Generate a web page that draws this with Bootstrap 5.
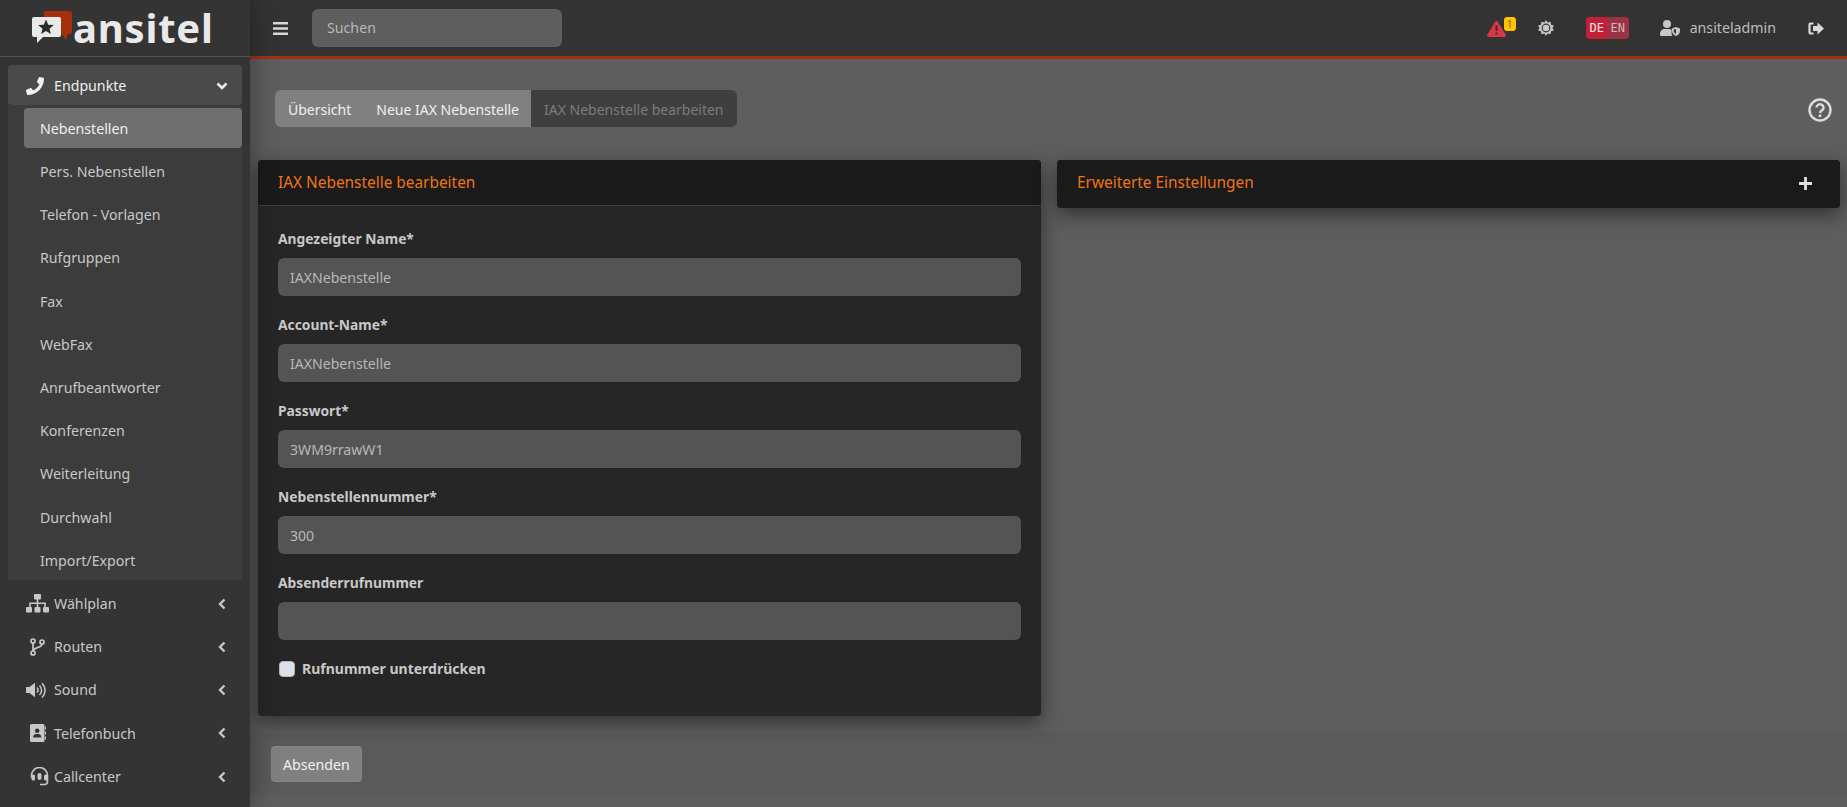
<!DOCTYPE html>
<html lang="de">
<head>
<meta charset="utf-8">
<title>ansitel</title>
<link rel="stylesheet" href="https://cdn.jsdelivr.net/npm/bootstrap@5.3.0/dist/css/bootstrap.min.css">
<style>
html,body{height:807px;overflow:hidden}
body{font-family:"Noto Sans","Liberation Sans",sans-serif;font-size:14.2px;background:#5e5e5e;color:#c8c8c8}
.app-wrap{height:807px}
.side-panel{width:250px;flex:none;background:#343434;box-shadow:0 0 24px rgba(0,0,0,.4);z-index:3;height:807px;overflow:hidden}
.logo-box{height:57px;border-bottom:1px solid #4b545c;padding-left:32px;gap:0}
.logo-word{font-family:"Noto Sans",sans-serif;font-size:40px;font-weight:700;line-height:56px;height:56px;color:#e9e9e9;letter-spacing:.8px}
.side-nav{padding:8px 8px 0}
.side-link{height:40px;color:#c8c8c8;padding:1px 14px 0 18px;border-radius:4px;margin-bottom:3.25px;text-decoration:none}
.side-link.is-open{background:#4a4a4a;color:#efefef;margin-bottom:0}
.side-ico{width:28px;flex:none;display:flex;justify-content:flex-start;align-items:center}
.side-ico svg{fill:#c8c8c8}
.is-open .side-ico svg{fill:#f2f2f2}
.side-sub{background:#3c3c3c;padding:3px 0 0 16px;height:475px;margin-bottom:3px}
.sub-link{display:flex;align-items:center;height:40px;margin-bottom:3.2px;padding:1px 0 0 16px;color:#c8c8c8;border-radius:4px;text-decoration:none}
.sub-link.is-active{background:#6f6f6f;color:#efefef}
.top-bar{height:59px;flex:none;background:#333;border-bottom:3px solid #a5300e;padding:0 0 0 23px}
.top-bar .form-control{width:250px;height:38px;margin-left:24px;background:#5e5e5e;border:0;color:#b8b8b8;font-size:14.2px;padding:0 0 2px 15px}
.top-bar .form-control::placeholder{color:#b8b8b8;opacity:1}
.tool-area{margin-left:auto;color:#c8c8c8}
.warn-slot{width:30px;height:20px;margin:0 21px 3px 0}
.warn-pip{position:absolute;left:17px;top:0;width:12px;height:14px;background:#ffc107;border-radius:3px;font-size:10px;line-height:14px;text-align:center;color:#8a6d0b}
.lang-pair{margin:0 31px 0 32px;font-family:"DejaVu Sans Mono","Liberation Mono",monospace}
.lang-pair .btn{--bs-btn-padding-x:0;--bs-btn-padding-y:0;--bs-btn-font-size:12px;--bs-btn-border-width:0;width:22px;height:22px;line-height:22px;border-radius:4px}
.lang-on{--bs-btn-bg:#c32038;--bs-btn-color:#f4e6e8;--bs-btn-hover-bg:#c32038;--bs-btn-hover-color:#f4e6e8}
.lang-off{--bs-btn-bg:#9a3444;--bs-btn-color:#d9b5ba;--bs-btn-hover-bg:#9a3444;--bs-btn-hover-color:#d9b5ba}
.user-name{margin:0 32px 0 10px;color:#bdbdbd}
.exit-slot{margin-right:23px}
.crumb-row{padding:31px 15px 0 25px;height:101px}
.crumb-row .btn{--bs-btn-font-size:14px;--bs-btn-padding-y:0;--bs-btn-padding-x:13px;--bs-btn-border-width:0;height:37px;line-height:39px}
.crumb-link{--bs-btn-bg:#808080;--bs-btn-color:#f0f0f0;--bs-btn-hover-bg:#808080;--bs-btn-hover-color:#f0f0f0}
.btn-group>.crumb-link:first-child{box-shadow:inset -1px 0 0 #6c6c6c}
.btn-group>.crumb-link:nth-child(2){margin-left:0}
.crumb-last.btn{--bs-btn-bg:#3f3f3f;--bs-btn-color:#7c7c7c;--bs-btn-disabled-bg:#3f3f3f;--bs-btn-disabled-color:#7c7c7c;opacity:1;margin-left:0}
.panes{padding:0 7px 0 8px;gap:16px;position:relative;z-index:2}
.pane{width:783px;flex:none;background:#262626;border:0;border-radius:4px;box-shadow:0 6px 20px rgba(0,0,0,.5);color:#c8c8c8}
.pane .card-header{height:46px;background:#1a1a1a;border-bottom:1px solid #3d3d3d;color:#f0750f;font-size:15.4px;padding:0 20px;border-radius:4px 4px 0 0}
.pane-flat .card-header{height:48px;border-bottom:0;border-radius:4px;padding-bottom:2px}
.pane .card-body{padding:22px 20px 0;height:510px}
.field-box{height:86px}
.pane .form-label{font-weight:700;color:#c8c8c8;margin-bottom:8px;line-height:22px;display:block;font-size:13.8px}
.pane .form-control{height:38px;background:#545454;border:0;color:#b8b8b8;font-size:14.1px;padding:0 12px}
.pane .form-check{min-height:0;padding-left:24px;margin:0;line-height:22px;font-size:14px;font-weight:700}
.pane .form-check-input{width:16px;height:16px;margin:3px 0 0 -23px;background-color:#dde1e7;border:1px solid #b5b5b5;border-radius:4px}
.foot-band{background:#5a5a5a;margin-top:17px;height:62px;padding:13px 0 0 21px}
.foot-band .btn{--bs-btn-bg:#808080;--bs-btn-color:#f0f0f0;--bs-btn-hover-bg:#808080;--bs-btn-hover-color:#f0f0f0;--bs-btn-border-color:#878787;--bs-btn-hover-border-color:#878787;--bs-btn-font-size:14.2px;--bs-btn-padding-y:0;--bs-btn-padding-x:11px;height:36px;line-height:35px;border-radius:4px}
</style>
</head>
<body>
<div class="app-wrap d-flex">
  <aside class="side-panel d-flex flex-column">
    <div class="logo-box d-flex align-items-center">
      <svg width="41" height="34" viewBox="0 0 41 34">
        <path fill="#a5300e" d="M12 0H38a2 2 0 0 1 2 2V21a2 2 0 0 1-2 2H36L34 29 29 22H12Z"/>
        <path fill="#e9e9e9" d="M2 6H27a2 2 0 0 1 2 2V24a2 2 0 0 1-2 2H11L5 32V26H2a2 2 0 0 1-2-2V8a2 2 0 0 1 2-2Z"/>
        <path fill="#2b2b2b" d="M14 8.500l2.200 5.200 5.600.4-4.300 3.600 1.400 5.400-4.900-3-4.900 3 1.400-5.400-4.300-3.600 5.600-.4Z"/>
      </svg>
      <span class="logo-word">ansitel</span>
    </div>
    <nav class="side-nav nav flex-column flex-nowrap">
      <a class="side-link is-open d-flex align-items-center" href="#">
        <span class="side-ico"><svg width="18" height="18" viewBox="0 0 512 512"><path d="M493.4 24.6l-104-24c-11.3-2.6-22.9 3.3-27.5 13.9l-48 112c-4.2 9.8-1.4 21.3 6.9 28l60.6 49.6c-36 76.7-98.9 140.5-177.2 177.2l-49.6-60.6c-6.8-8.3-18.2-11.1-28-6.9l-112 48C3.9 366.5-2 378.1.6 389.4l24 104C27.1 504.2 36.7 512 48 512c256.1 0 464-207.5 464-464 0-11.2-7.7-20.9-18.6-23.4z"/></svg></span>
        <span class="flex-grow-1">Endpunkte</span>
        <svg width="12" height="12" viewBox="0 0 12 12"><path d="M1.500 3.500 6 8l4.500-4.500" fill="none" stroke="#f2f2f2" stroke-width="2.600"/></svg>
      </a>
      <div class="side-sub">
        <a class="sub-link is-active" href="#">Nebenstellen</a>
        <a class="sub-link" href="#">Pers. Nebenstellen</a>
        <a class="sub-link" href="#">Telefon - Vorlagen</a>
        <a class="sub-link" href="#">Rufgruppen</a>
        <a class="sub-link" href="#">Fax</a>
        <a class="sub-link" href="#">WebFax</a>
        <a class="sub-link" href="#">Anrufbeantworter</a>
        <a class="sub-link" href="#">Konferenzen</a>
        <a class="sub-link" href="#">Weiterleitung</a>
        <a class="sub-link" href="#">Durchwahl</a>
        <a class="sub-link" href="#">Import/Export</a>
      </div>
      <a class="side-link d-flex align-items-center" href="#">
        <span class="side-ico"><svg width="23" height="19" viewBox="0 0 23 19"><rect x="8" y="0" width="7" height="5.500" rx="1"/><rect x="0" y="13" width="6" height="5.500" rx="1"/><rect x="8.500" y="13" width="6" height="5.500" rx="1"/><rect x="17" y="13" width="6" height="5.500" rx="1"/><path d="M10.700 5h1.600v3.500h7.500V13h-1.600v-3H12.300v3h-1.600v-3H4.800v3H3.200V8.500h7.500Z"/></svg></span>
        <span class="flex-grow-1">Wählplan</span>
        <svg width="12" height="12" viewBox="0 0 12 12"><path d="M8.500 1.500 4 6l4.500 4.500" fill="none" stroke="#c8c8c8" stroke-width="2.400"/></svg>
      </a>
      <a class="side-link d-flex align-items-center" href="#">
        <span class="side-ico"><svg class="ms-1" width="15" height="18" viewBox="0 0 15 18"><g fill="none" stroke="#c8c8c8" stroke-width="1.700"><circle cx="3" cy="3" r="2"/><circle cx="3" cy="15" r="2"/><circle cx="12" cy="4" r="2"/><path d="M3 5V13M12 6C12 10 4 9 3 13"/></g></svg></span>
        <span class="flex-grow-1">Routen</span>
        <svg width="12" height="12" viewBox="0 0 12 12"><path d="M8.500 1.500 4 6l4.500 4.500" fill="none" stroke="#c8c8c8" stroke-width="2.400"/></svg>
      </a>
      <a class="side-link d-flex align-items-center" href="#">
        <span class="side-ico"><svg width="21" height="17" viewBox="0 0 21 17"><path d="M0 5H3.500L9 .8V15.200L3.500 11H0Z"/><g fill="none" stroke="#c8c8c8" stroke-width="1.500"><path d="M11 5.500a3.500 3.500 0 0 1 0 5"/><path d="M13.500 3.500a6.500 6.500 0 0 1 0 9.500"/><path d="M16 1.200a10 10 0 0 1 0 14.300"/></g></svg></span>
        <span class="flex-grow-1">Sound</span>
        <svg width="12" height="12" viewBox="0 0 12 12"><path d="M8.500 1.500 4 6l4.500 4.500" fill="none" stroke="#c8c8c8" stroke-width="2.400"/></svg>
      </a>
      <a class="side-link d-flex align-items-center" href="#">
        <span class="side-ico"><svg class="ms-1" width="16" height="18" viewBox="0 0 16 18"><path fill-rule="evenodd" d="M1.500 0H13a1.500 1.500 0 0 1 1.500 1.500V16.500A1.500 1.500 0 0 1 13 18H1.500A1.500 1.500 0 0 1 0 16.500V1.500A1.500 1.500 0 0 1 1.500 0ZM7.200 4.500a2.300 2.300 0 1 0 0 4.600 2.300 2.300 0 0 0 0-4.600ZM3 13.500H11.400C11.400 11.500 10 10 8.500 10H5.900C4.400 10 3 11.500 3 13.500Z"/><rect x="15" y="2.500" width="1" height="3"/><rect x="15" y="7.500" width="1" height="3"/><rect x="15" y="12.500" width="1" height="3"/></svg></span>
        <span class="flex-grow-1">Telefonbuch</span>
        <svg width="12" height="12" viewBox="0 0 12 12"><path d="M8.500 1.500 4 6l4.500 4.500" fill="none" stroke="#c8c8c8" stroke-width="2.400"/></svg>
      </a>
      <a class="side-link d-flex align-items-center" href="#">
        <span class="side-ico"><svg class="ms-1" width="19" height="19" viewBox="0 0 19 19"><path d="M1.500 10.500V8.500a8 8 0 0 1 16 0v6c0 2-1.500 3-3 3H10" fill="none" stroke="#c8c8c8" stroke-width="1.600"/><rect x="1.500" y="7.500" width="3.500" height="6" rx="1.500"/><rect x="14" y="7.500" width="3.500" height="6" rx="1.500"/><path d="M6 7.500a3.500 3.500 0 0 1 7 0v4a3.500 3.500 0 0 1-7 0Z" fill="#343434"/><path d="M7.500 8a2 2 0 0 1 4 0v3a2 2 0 0 1-4 0Z"/></svg></span>
        <span class="flex-grow-1">Callcenter</span>
        <svg width="12" height="12" viewBox="0 0 12 12"><path d="M8.500 1.500 4 6l4.500 4.500" fill="none" stroke="#c8c8c8" stroke-width="2.400"/></svg>
      </a>
    </nav>
  </aside>

  <div class="flex-grow-1 d-flex flex-column" style="min-width:0">
    <header class="top-bar navbar flex-nowrap justify-content-start">
      <svg width="15" height="13" viewBox="0 0 15 13"><path d="M0 0H15V2.500H0ZM0 5.200H15V7.700H0ZM0 10.500H15V13H0Z" fill="#d8d8d8"/></svg>
      <input class="form-control" type="text" placeholder="Suchen">
      <div class="tool-area d-flex align-items-center">
        <span class="warn-slot position-relative d-block">
          <svg class="position-absolute bottom-0 start-0" width="19" height="16" viewBox="0 0 19 16"><path d="M9.500 0a1.500 1.500 0 0 1 1.300.8l8 13A1.500 1.500 0 0 1 17.500 16h-16a1.500 1.500 0 0 1-1.300-2.200l8-13A1.500 1.500 0 0 1 9.500 0Z" fill="#dc3545"/><path d="M8.500 4.500h2V10h-2ZM8.500 11.500h2v2h-2Z" fill="#333"/></svg>
          <span class="warn-pip">1</span>
        </span>
        <svg width="16" height="16" viewBox="0 0 16 16"><path d="M8 0l1.600 2.600 2.900-.9.500 3 2.900.9-1.400 2.400 1.400 2.400-2.900.9-.5 3-2.900-.9L8 16l-1.600-2.600-2.900.9-.5-3-2.900-.9L1.500 8 .1 5.600 3 4.700l.5-3 2.900.9Z" fill="#c8c8c8" fill-rule="evenodd"/><circle cx="8" cy="8" r="4.400" fill="#333"/><circle cx="8" cy="8" r="3.200" fill="#c8c8c8"/></svg>
        <div class="lang-pair btn-group" role="group">
          <a class="btn lang-on" href="#">DE</a>
          <a class="btn lang-off" href="#">EN</a>
        </div>
        <svg width="20" height="16" viewBox="0 0 20 16"><circle cx="7" cy="4" r="4" fill="#c8c8c8"/><path d="M0 14.500C0 11 2 9 5 9h4c1 0 2 .3 2.600 .8V14c0 .8.300 1.400.8 2H1.500A1.500 1.500 0 0 1 0 14.500Z" fill="#c8c8c8"/><path d="M16 7l4 1.500V11c0 2.500-2 4.300-4 5-2-.7-4-2.500-4-5V8.500Z" fill="#c8c8c8"/><path d="M16 9v5c-1-.5-2.300-1.600-2.300-3V9.700Z" fill="#333"/></svg>
        <span class="user-name">ansiteladmin</span>
        <svg class="exit-slot" width="16" height="13" viewBox="0 0 16 13"><path d="M5.500 1.500H2.500A1 1 0 0 0 1.500 2.500V10.500A1 1 0 0 0 2.500 11.500H5.500" fill="none" stroke="#d8d8d8" stroke-width="2.200"/><path d="M9.500 0.500 16 6.500 9.500 12.500V9H5V4H9.500Z" fill="#d8d8d8"/></svg>
      </div>
    </header>

    <main class="flex-grow-1">
      <div class="crumb-row d-flex align-items-start justify-content-between">
        <div class="btn-group" role="group">
          <a class="btn crumb-link" href="#">Übersicht</a>
          <a class="btn crumb-link" href="#">Neue IAX Nebenstelle</a>
          <button class="btn crumb-last" disabled>IAX Nebenstelle bearbeiten</button>
        </div>
        <svg class="mt-2" width="24" height="24" viewBox="0 0 24 24"><circle cx="12" cy="12" r="10.500" fill="none" stroke="#dcdcdc" stroke-width="2.400"/><path d="M8.500 9.500a3.500 3.300 0 1 1 5.500 2.700c-1.400.9-2 1.300-2 2.800" fill="none" stroke="#dcdcdc" stroke-width="2.400"/><rect x="10.700" y="16.500" width="2.600" height="2.600" fill="#dcdcdc"/></svg>
      </div>
      <div class="panes d-flex align-items-start">
        <section class="pane card">
          <div class="card-header d-flex align-items-center">IAX Nebenstelle bearbeiten</div>
          <div class="card-body">
            <div class="field-box"><label class="form-label">Angezeigter Name*</label><input class="form-control" value="IAXNebenstelle"></div>
            <div class="field-box"><label class="form-label">Account-Name*</label><input class="form-control" value="IAXNebenstelle"></div>
            <div class="field-box"><label class="form-label">Passwort*</label><input class="form-control" value="3WM9rrawW1"></div>
            <div class="field-box"><label class="form-label">Nebenstellennummer*</label><input class="form-control" value="300"></div>
            <div class="field-box"><label class="form-label">Absenderrufnummer</label><input class="form-control" value=""></div>
            <div class="form-check"><input class="form-check-input" type="checkbox" id="cb1"><label class="form-check-label" for="cb1">Rufnummer unterdrücken</label></div>
          </div>
        </section>
        <section class="pane pane-flat card">
          <div class="card-header d-flex align-items-center justify-content-between">
            <span>Erweiterte Einstellungen</span>
            <svg width="13" height="13" viewBox="0 0 12 12" class="me-2"><path d="M4.700 0H7.300V4.700H12V7.300H7.300V12H4.700V7.300H0V4.700H4.700Z" fill="#e0e0e0"/></svg>
          </div>
        </section>
      </div>
      <div class="foot-band"><button class="btn" type="button">Absenden</button></div>
    </main>
  </div>
</div>
<script src="https://cdn.jsdelivr.net/npm/bootstrap@5.3.0/dist/js/bootstrap.bundle.min.js"></script>
</body>
</html>
